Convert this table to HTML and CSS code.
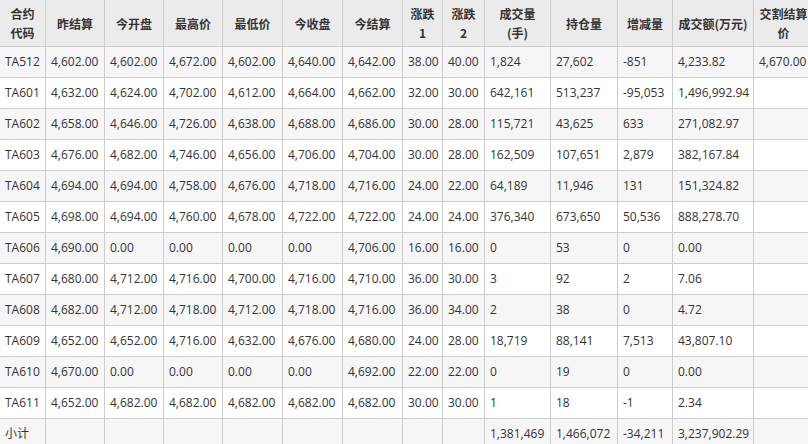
FILE: index.html
```html
<!DOCTYPE html>
<html lang="zh-CN">
<head>
<meta charset="utf-8">
<title>TA 行情</title>
<link rel="stylesheet" href="styles.css">
</head>
<body>
<table class="quotes">
  <colgroup>
    <col class="c-code"><col class="c-p"><col class="c-p"><col class="c-p"><col class="c-p2"><col class="c-p2"><col class="c-p2">
    <col class="c-chg1"><col class="c-chg2"><col class="c-vol"><col class="c-oi"><col class="c-d"><col class="c-amt"><col class="c-settle">
  </colgroup>
  <thead>
    <tr>
      <th>合约<br>代码</th><th>昨结算</th><th>今开盘</th><th>最高价</th><th>最低价</th><th>今收盘</th><th>今结算</th>
      <th>涨跌<br>1</th><th>涨跌<br>2</th><th>成交量<br>(手)</th><th>持仓量</th><th>增减量</th><th>成交额(万元)</th><th>交割结算<br>价</th>
    </tr>
  </thead>
  <tbody>
    <tr><td>TA512</td><td>4,602.00</td><td>4,602.00</td><td>4,672.00</td><td>4,602.00</td><td>4,640.00</td><td>4,642.00</td><td>38.00</td><td>40.00</td><td>1,824</td><td>27,602</td><td>-851</td><td>4,233.82</td><td>4,670.00</td></tr>
    <tr><td>TA601</td><td>4,632.00</td><td>4,624.00</td><td>4,702.00</td><td>4,612.00</td><td>4,664.00</td><td>4,662.00</td><td>32.00</td><td>30.00</td><td>642,161</td><td>513,237</td><td>-95,053</td><td>1,496,992.94</td><td></td></tr>
    <tr><td>TA602</td><td>4,658.00</td><td>4,646.00</td><td>4,726.00</td><td>4,638.00</td><td>4,688.00</td><td>4,686.00</td><td>30.00</td><td>28.00</td><td>115,721</td><td>43,625</td><td>633</td><td>271,082.97</td><td></td></tr>
    <tr><td>TA603</td><td>4,676.00</td><td>4,682.00</td><td>4,746.00</td><td>4,656.00</td><td>4,706.00</td><td>4,704.00</td><td>30.00</td><td>28.00</td><td>162,509</td><td>107,651</td><td>2,879</td><td>382,167.84</td><td></td></tr>
    <tr><td>TA604</td><td>4,694.00</td><td>4,694.00</td><td>4,758.00</td><td>4,676.00</td><td>4,718.00</td><td>4,716.00</td><td>24.00</td><td>22.00</td><td>64,189</td><td>11,946</td><td>131</td><td>151,324.82</td><td></td></tr>
    <tr><td>TA605</td><td>4,698.00</td><td>4,694.00</td><td>4,760.00</td><td>4,678.00</td><td>4,722.00</td><td>4,722.00</td><td>24.00</td><td>24.00</td><td>376,340</td><td>673,650</td><td>50,536</td><td>888,278.70</td><td></td></tr>
    <tr><td>TA606</td><td>4,690.00</td><td>0.00</td><td>0.00</td><td>0.00</td><td>0.00</td><td>4,706.00</td><td>16.00</td><td>16.00</td><td>0</td><td>53</td><td>0</td><td>0.00</td><td></td></tr>
    <tr><td>TA607</td><td>4,680.00</td><td>4,712.00</td><td>4,716.00</td><td>4,700.00</td><td>4,716.00</td><td>4,710.00</td><td>36.00</td><td>30.00</td><td>3</td><td>92</td><td>2</td><td>7.06</td><td></td></tr>
    <tr><td>TA608</td><td>4,682.00</td><td>4,712.00</td><td>4,718.00</td><td>4,712.00</td><td>4,718.00</td><td>4,716.00</td><td>36.00</td><td>34.00</td><td>2</td><td>38</td><td>0</td><td>4.72</td><td></td></tr>
    <tr><td>TA609</td><td>4,652.00</td><td>4,652.00</td><td>4,716.00</td><td>4,632.00</td><td>4,676.00</td><td>4,680.00</td><td>24.00</td><td>28.00</td><td>18,719</td><td>88,141</td><td>7,513</td><td>43,807.10</td><td></td></tr>
    <tr><td>TA610</td><td>4,670.00</td><td>0.00</td><td>0.00</td><td>0.00</td><td>0.00</td><td>4,692.00</td><td>22.00</td><td>22.00</td><td>0</td><td>19</td><td>0</td><td>0.00</td><td></td></tr>
    <tr><td>TA611</td><td>4,652.00</td><td>4,682.00</td><td>4,682.00</td><td>4,682.00</td><td>4,682.00</td><td>4,682.00</td><td>30.00</td><td>30.00</td><td>1</td><td>18</td><td>-1</td><td>2.34</td><td></td></tr>
    <tr><td>小计</td><td></td><td></td><td></td><td></td><td></td><td></td><td></td><td></td><td>1,381,469</td><td>1,466,072</td><td>-34,211</td><td>3,237,902.29</td><td></td></tr>
  </tbody>
</table>
</body>
</html>
```
FILE: styles.css
```css
html, body {
  margin: 0;
  padding: 0;
  background: #ffffff;
}

body {
  overflow: hidden;
  font-family: "Open Sans", "Noto Sans CJK SC", sans-serif;
  font-size: 12px;
  color: #333333;
}

.quotes {
  border-collapse: collapse;
  table-layout: fixed;
  width: 814px;
  margin: -1px 0 0 -1px;
}

.c-code { width: 46px; }
.c-p { width: 59px; }
.c-p2 { width: 60px; }
.c-chg1 { width: 40px; }
.c-chg2 { width: 42px; }
.c-vol { width: 66px; }
.c-oi { width: 67px; }
.c-d { width: 55px; }
.c-amt { width: 81px; }
.c-settle { width: 60px; }

.quotes th,
.quotes td {
  border: 1px solid #cccccc;
  padding: 0 0 0 5px;
  white-space: nowrap;
  overflow: hidden;
}

.quotes th {
  height: 46px;
  background: #ebebeb;
  font-family: "Noto Sans CJK SC", "Open Sans", sans-serif;
  font-weight: bold;
  font-size: 12px;
  line-height: 19px;
  text-align: center;
  padding: 0;
  color: #333333;
}

.quotes td {
  height: 30px;
  text-align: left;
  line-height: 16px;
}

.quotes tbody tr:nth-child(odd) td {
  background: #f6f6f6;
}

.quotes tbody tr:nth-child(even) td {
  background: #ffffff;
}
```
